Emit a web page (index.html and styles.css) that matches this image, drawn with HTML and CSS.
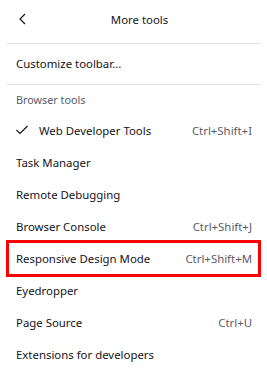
FILE: index.html
```html
<!DOCTYPE html>
<html lang="en">

<head>
    <meta charset="UTF-8">
    <title>More tools</title>
    <link rel="stylesheet" href="styles.css">
</head>

<body>
    <div class="panel">
        <header class="panel-header">
            <span class="back">
                <svg width="10" height="12" viewBox="0 0 10 12"><path d="M7 1 L2 6 L7 11" fill="none" stroke="#15141a" stroke-width="1.2"/></svg>
            </span>
            <h1>More tools</h1>
        </header>
        <div class="sep"></div>
        <div class="item tall">Customize toolbar...</div>
        <div class="sep"></div>
        <div class="group-title">Browser tools</div>
        <div class="item checked">
            <span class="check">
                <svg width="12" height="10" viewBox="0 0 12 10"><path d="M0.5 5 L4 8.5 L11.5 1" fill="none" stroke="#15141a" stroke-width="1.2"/></svg>
            </span>
            <span class="label">Web Developer Tools</span>
            <span class="key">Ctrl+Shift+I</span>
        </div>
        <div class="item"><span class="label">Task Manager</span></div>
        <div class="item"><span class="label">Remote Debugging</span></div>
        <div class="item"><span class="label">Browser Console</span><span class="key">Ctrl+Shift+J</span></div>
        <div class="item marked"><span class="label">Responsive Design Mode</span><span class="key">Ctrl+Shift+M</span></div>
        <div class="item"><span class="label">Eyedropper</span></div>
        <div class="item"><span class="label">Page Source</span><span class="key">Ctrl+U</span></div>
        <div class="item"><span class="label">Extensions for developers</span></div>
    </div>
</body>

</html>
```

FILE: styles.css
```css
html,
body {
    margin: 0;
    padding: 0;
    background: #fff;
    color: #15141a;
    font-family: "Noto Sans", "Open Sans", sans-serif;
    font-size: 11.4px;
}

.panel {
    padding: 0 7px;
}

.panel-header {
    height: 43px;
    display: flex;
    align-items: center;
    justify-content: center;
    position: relative;
    padding-left: 12px;
}

.panel-header h1 {
    margin: 0;
    font-size: 11.4px;
    font-weight: normal;
    margin-top: -5px;
}

.back {
    position: absolute;
    left: 11px;
    top: 13px;
    display: flex;
}

.sep {
    height: 1px;
    background: #e0e0e6;
}

.item {
    height: 32px;
    display: flex;
    align-items: center;
    padding: 0 8px 0 9px;
    box-sizing: border-box;
}

.item.tall {
    height: 40px;
    padding-bottom: 2px;
}

.label {
    flex: 1;
}

.key {
    color: #5b5b66;
}

.group-title {
    height: 29px;
    line-height: 29px;
    padding-left: 9px;
    color: #5b5b66;
    font-size: 10.8px;
}

.check {
    width: 23px;
    display: flex;
}

.item.marked {
    height: 37px;
    margin: -2px -1px -3px;
    border: 3px solid #f00;
    padding: 0 6px 0 7px;
}
```
